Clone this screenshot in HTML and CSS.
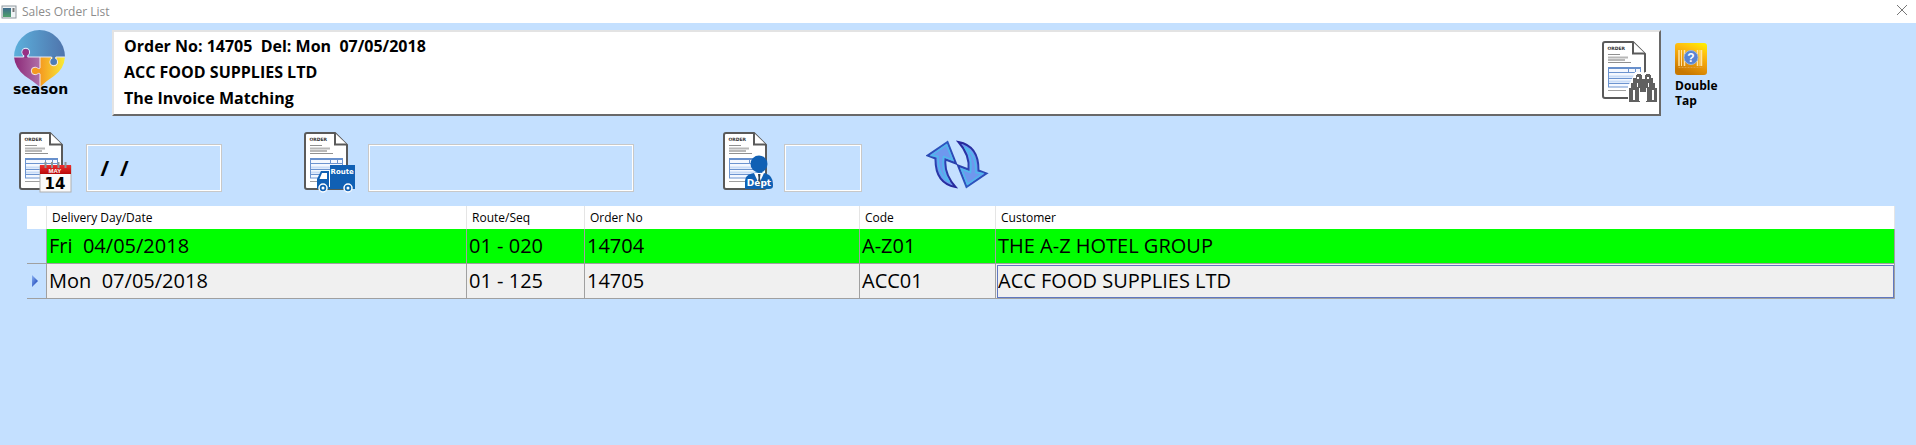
FILE: index.html
```html
<!DOCTYPE html>
<html lang="en">
<head>
<meta charset="utf-8">
<title>Sales Order List</title>
<link rel="stylesheet" href="styles.css">
</head>
<body>
<svg class="defs" aria-hidden="true">
  <defs>
    <linearGradient id="app-g" x1="0" y1="0" x2="0" y2="1"><stop offset="0" stop-color="#3d6a8c"/><stop offset="1" stop-color="#4fa06a"/></linearGradient>
    <linearGradient id="top-g"><stop offset="0" stop-color="#5cb0dc"/><stop offset="1" stop-color="#4f74ac"/></linearGradient>
    <linearGradient id="left-g"><stop offset="0" stop-color="#8c2878"/><stop offset="1" stop-color="#b070a8"/></linearGradient>
    <linearGradient id="right-g"><stop offset="0" stop-color="#f59a20"/><stop offset="1" stop-color="#f8ec38"/></linearGradient>
    <linearGradient id="red-g" x1="0" y1="0" x2="0" y2="1"><stop offset="0" stop-color="#f03030"/><stop offset="1" stop-color="#b80808"/></linearGradient>
    <linearGradient id="gold-g" x1="0.9" y1="0" x2="0.5" y2="1"><stop offset="0" stop-color="#fff000"/><stop offset="0.3" stop-color="#ffc010"/><stop offset="0.65" stop-color="#eb9a0a"/><stop offset="1" stop-color="#c87800"/></linearGradient>
    <linearGradient id="arrow-g" x1="0" y1="0" x2="0" y2="1"><stop offset="0" stop-color="#2c58c0"/><stop offset="1" stop-color="#28289c"/></linearGradient>
    <linearGradient id="mark-g" x1="0" y1="0" x2="1" y2="1"><stop offset="0" stop-color="#8cb4f4"/><stop offset="1" stop-color="#0c34b0"/></linearGradient>
    <symbol id="doc" viewBox="0 0 54 60">
      <path d="M3 1H31L43 13V55Q43 57 41 57H3Q1 57 1 55V3Q1 1 3 1Z" fill="#fff" stroke="#5a5a5a" stroke-width="2"/>
      <path d="M31 1V12.500H43" fill="#fff" stroke="#5a5a5a" stroke-width="2"/>
      <text x="5.500" y="9" font-family="DejaVu Sans" font-weight="bold" font-size="4.500" fill="#333">ORDER</text>
      <path d="M6 13.500H18M6 21.500H29" stroke="#909090"/>
      <path d="M6 16.500H26M6 19H23" stroke="#b8b8b8" stroke-width="2"/>
      <path d="M6 49.500H24" stroke="#a0a0a0"/>
      <rect x="6" y="26" width="33" height="20" fill="#f4f8ff"/>
      <path d="M6 35.500H39M6 40.500H39" stroke="#c8dcf8" stroke-width="2"/>
      <path d="M6 31.500H39M6 37.500H39M6 42.500H39M6.500 26V46M6 46H39M26.500 26V31M33.500 26V31M38.500 26V46" fill="none" stroke="#6c94d0"/>
      <path d="M6 27H39" stroke="#6890cc" stroke-width="2"/>
    </symbol>
  </defs>
</svg>

<header class="titlebar">
  <svg class="app-icon" viewBox="0 0 16 14" aria-hidden="true">
    <rect x="1" y="1" width="14" height="12" fill="#f0f4f6" stroke="#8f989e" stroke-width="1"/>
    <rect x="2" y="3" width="8" height="9" fill="url(#app-g)"/><path d="M12.500 3V7" stroke="#777" stroke-width="2"/>
  </svg>
  <h1 class="title">Sales Order List</h1>
  <button class="close" type="button" aria-label="Close">
    <svg width="12" height="12" viewBox="0 0 12 12"><path d="M1 1L11 11M11 1L1 11" stroke="#777" fill="none"/></svg>
  </button>
</header>

<main class="content">
  <section class="summary">
    <svg class="logo" viewBox="0 0 56 68" role="img" aria-label="season">
      <path d="M1 27A25.500 27 0 0 1 52 27Z" fill="url(#top-g)"/>
      <path d="M1 27H27V57Q20 51 12 46Q2 38 1 27Z" fill="url(#left-g)"/>
      <path d="M27 27H52Q51 39 41 46Q33 51 27 57Z" fill="url(#right-g)"/>
      <path d="M1 27H10C12 26 9 24.500 9 22A3.700 3.700 0 0 1 16.500 22C16.500 24.500 13.500 26 15.500 27H38C40 28 37 29.500 37 32A3.700 3.700 0 0 0 44.500 32C44.500 29.500 41.500 28 43.500 27H52" fill="none" stroke="#e8e8f8" stroke-width="1.200"/>
      <path d="M27 27V38C26 40 24.500 37.200 22 37.200A3.700 3.700 0 0 0 22 44.700C24.500 44.700 26 42 27 44V57" fill="#f59a20" stroke="#f0e8f0"/>
      <circle cx="12.700" cy="22.300" r="3.300" fill="#983084"/><rect x="11.500" y="24" width="2.500" height="4" fill="#983084"/>
      <circle cx="40.700" cy="31.700" r="3.300" fill="#4c7cb8"/><rect x="39.500" y="26" width="2.500" height="4" fill="#4c7cb8"/>
      <text x="0" y="64" font-family="DejaVu Sans" font-weight="bold" font-size="14">season</text>
    </svg>
    <div class="panel">
      <div class="panel-text">
        <p>Order No: 14705&nbsp; Del: Mon&nbsp; 07/05/2018</p>
        <p>ACC FOOD SUPPLIES LTD</p>
        <p>The Invoice Matching</p>
      </div>
      <button class="icon-button" type="button" aria-label="Find order">
        <svg class="doc-icon" viewBox="0 0 56 62">
          <use href="#doc" width="54" height="60"/>
          <path d="M26 61V45L31 36L33 31H39L41 33L43 31H49L51 36L56 45V61Z" fill="#fff"/>
          <path d="M27 61V47H29V42H31V37H34V34H35V33H39V34H40V38H43V34H44V33H48V34H49V37H51V42H53V47H55V61H44V51H38V61Z" fill="#606060"/>
          <path d="M35 36H37V38H35ZM45 36H47V38H45ZM35 42H36V46H35ZM46 42H47V46H46ZM31 49H33V59H31ZM37 47H38V60H37ZM44 47H45V60H44ZM50 49H52V59H50Z" fill="#fff"/>
        </svg>
      </button>
    </div>
    <button class="double-tap" type="button">
      <svg width="32" height="32" viewBox="0 0 32 32" aria-hidden="true">
        <rect width="32" height="32" rx="3" fill="url(#gold-g)"/>
        <path d="M4 7V23M9.500 7V23M22.500 7V23M26.500 7V23" stroke="#ffe3a4" stroke-width="1.500"/><path d="M6.500 7V23M25 7V23" stroke="#ffe3a4"/>
        <path d="M3.500 24.500H28" stroke="#dfa040" stroke-dasharray="2 1"/>
        <circle cx="16" cy="14.500" r="7" fill="#5884d4" stroke="#a4b8d4"/>
        <text x="16" y="19" text-anchor="middle" font-family="Liberation Sans" font-weight="bold" font-size="12" fill="#fff">?</text>
      </svg>
      <span>Double<br>Tap</span>
    </button>
  </section>

  <form class="filters">
    <div class="filter filter-date">
      <label for="date" aria-label="Delivery date">
        <svg class="doc-icon" viewBox="0 0 56 62">
          <use href="#doc" width="54" height="60"/>
          <rect x="21" y="34" width="31" height="26" fill="#fafafa" stroke="#b0b0b0"/>
          <rect x="21" y="33" width="31" height="9" fill="url(#red-g)"/>
          <path d="M26.500 30V36M33 30V36M39.500 30V36M46.500 30V36" stroke="#8c9494" stroke-width="2"/>
          <text x="36" y="41" text-anchor="middle" font-family="Liberation Sans" font-weight="bold" font-size="6" fill="#fff">MAY</text>
          <text x="36" y="57" text-anchor="middle" font-family="DejaVu Sans" font-weight="bold" font-size="15">14</text>
        </svg>
      </label>
      <input id="date" type="text" value=" /  /">
    </div>
    <div class="filter filter-route">
      <label for="route" aria-label="Route">
        <svg class="doc-icon" viewBox="0 0 56 62">
          <use href="#doc" width="54" height="60"/>
          <path d="M13 57V47L17 39H26V33H51V57Z" fill="#1060b4"/>
          <path d="M18 41H23V47H15.500Z" fill="#fff"/><path d="M25.500 39V55" stroke="#fff"/>
          <text x="26.500" y="41.500" font-family="DejaVu Sans" font-weight="bold" font-size="7" fill="#fff">Route</text>
          <g fill="#1060b4" stroke="#fff" stroke-width="1.500"><circle cx="19" cy="56" r="4"/><circle cx="44" cy="56" r="4"/></g>
          <circle cx="19" cy="56" r="1.500" fill="#fff"/><circle cx="44" cy="56" r="1.500" fill="#fff"/>
        </svg>
      </label>
      <input id="route" type="text">
    </div>
    <div class="filter filter-dept">
      <label for="dept" aria-label="Department">
        <svg class="doc-icon" viewBox="0 0 56 62">
          <use href="#doc" width="54" height="60"/>
          <path d="M22 57V49Q22 43 29 41.500L36 40L43 41.500Q50 44 50 52V54Q50 57 46 57Z" fill="#1060b4"/>
          <path d="M31 41H41L37 50H35Z" fill="#fff"/><path d="M35 42H37.500L37 46L38.500 53H34.500L35.500 46Z" fill="#345"/>
          <circle cx="36" cy="32" r="8.500" fill="#1060b4"/>
          <text x="36" y="54" text-anchor="middle" font-family="DejaVu Sans" font-weight="bold" font-size="9" fill="#fff">Dept</text>
        </svg>
      </label>
      <input id="dept" type="text">
    </div>
    <button class="refresh" type="button" aria-label="Refresh">
      <svg width="64" height="50" viewBox="0 0 64 50">
        <defs>
          <g id="arrow">
            <path d="M1.500 15.500L21.500 2L30 23.500L19.500 19.500Q18 34 29.500 47Q9 43 9.500 18.500Z" fill="#6f98ee" stroke="url(#arrow-g)" stroke-width="2"/>
            <path d="M5.500 15.500L20.500 5L26.500 20L17.500 16.500Q15 32 23.500 42Q12 36 12 16.500Z" fill="none" stroke="#50b8ec" stroke-width="1.500"/>
          </g>
        </defs>
        <use href="#arrow"/>
        <use href="#arrow" transform="rotate(180 31 24.500)"/>
      </svg>
    </button>
  </form>

  <table class="orders">
    <colgroup><col class="c-mark"><col class="c-date"><col class="c-route"><col class="c-order"><col class="c-code"><col></colgroup>
    <thead>
      <tr><th></th><th scope="col">Delivery Day/Date</th><th scope="col">Route/Seq</th><th scope="col">Order No</th><th scope="col">Code</th><th scope="col">Customer</th></tr>
    </thead>
    <tbody>
      <tr class="green"><td class="mark"></td><td>Fri&nbsp; 04/05/2018</td><td>01 - 020</td><td>14704</td><td>A-Z01</td><td>THE A-Z HOTEL GROUP</td></tr>
      <tr class="current"><td class="mark"><svg width="6" height="12" viewBox="0 0 6 12"><path d="M0 0L6 6L0 12Z" fill="url(#mark-g)"/></svg></td><td>Mon&nbsp; 07/05/2018</td><td>01 - 125</td><td>14705</td><td>ACC01</td><td class="focused">ACC FOOD SUPPLIES LTD</td></tr>
    </tbody>
  </table>
</main>
</body>
</html>
```
FILE: styles.css
```css
* { box-sizing: border-box; }

body {
  margin: 0;
  min-height: 100vh;
  background: #c4e0ff;
  color: #000;
  font-family: "Open Sans", "Noto Sans", sans-serif;
}

button {
  padding: 0;
  border: 0;
  background: none;
  color: inherit;
  font: inherit;
}

svg { display: block; }

.defs { position: absolute; width: 0; height: 0; }

.titlebar {
  display: flex;
  align-items: center;
  gap: 5px;
  height: 23px;
  padding: 0 8px 0 1px;
  background: #fff;
}

.app-icon { width: 16px; height: 14px; }

.title {
  flex: 1;
  margin: 0;
  color: #8c8c8c;
  font-size: 12px;
  font-weight: 400;
  line-height: 20px;
}

.close { margin-bottom: 3px; }

.content { padding: 7px 21px 0 13px; }

.summary { display: flex; align-items: flex-start; }

.logo { width: 56px; height: 68px; margin-right: 43px; }

.panel {
  flex: 1;
  display: flex;
  align-items: flex-start;
  justify-content: space-between;
  padding: 1px 1px 3px 10px;
  border: 2px solid;
  border-color: #e3e3e3 #696969 #696969 #e3e3e3;
  background: #fff;
}

.panel-text p {
  margin: 0;
  font-size: 16px;
  font-weight: 700;
  line-height: 26px;
}

.icon-button { padding-top: 8px; }

.doc-icon { width: 56px; height: 62px; }

.double-tap {
  display: flex;
  flex-direction: column;
  gap: 3px;
  width: 220px;
  margin: 13px 0 0 14px;
  font-size: 12px;
  font-weight: 700;
  line-height: 15px;
  text-align: left;
}

.filters {
  display: flex;
  align-items: flex-start;
  margin: 16px 0 12px 6px;
}

.filter { display: flex; }

.filter input {
  height: 48px;
  margin-top: 12px;
  padding: 0 8px;
  border: 1px solid #c8c8c8;
  outline: 1px solid #fff;
  outline-offset: -2px;
  border-radius: 0;
  background: transparent;
  font: 700 21px "Open Sans", "Noto Sans", sans-serif;
  white-space: pre;
}

.filter-date input { width: 136px; margin-left: 11px; }
.filter-route { margin-left: 82px; }
.filter-route input { width: 266px; margin-left: 8px; }
.filter-dept { margin-left: 89px; }
.filter-dept input { width: 78px; margin-left: 5px; }

.refresh { margin: 8px 0 0 64px; }

.orders {
  width: calc(100% - 14px);
  margin-left: 14px;
  border-collapse: separate;
  border-spacing: 0;
  table-layout: fixed;
}

.c-mark { width: 20px; }
.c-date { width: 420px; }
.c-route { width: 118px; }
.c-order { width: 275px; }
.c-code { width: 136px; }

.orders th {
  height: 23px;
  padding: 0 5px;
  border-right: 1px solid #e5e5e5;
  background: #fff;
  font-size: 12px;
  font-weight: 400;
  line-height: 20px;
  text-align: left;
}

.orders td {
  height: 35px;
  padding: 0 2px;
  border-right: 1px solid #a0a0a0;
  border-bottom: 1px solid #a0a0a0;
  font-size: 20px;
  line-height: 32px;
}

.green td { background: #0f0; }
.current td { background: #f0f0f0; }
.orders .mark { padding-left: 5px; background: transparent; }

.orders .focused {
  outline: 1px solid #6078c0;
  outline-offset: -2px;
}
```
